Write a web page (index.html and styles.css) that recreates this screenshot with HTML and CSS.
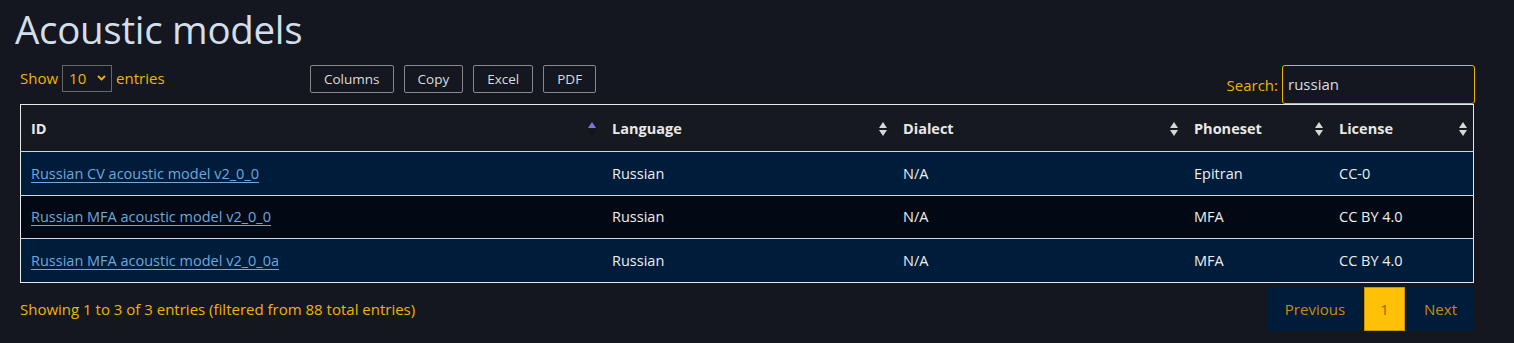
FILE: index.html
```html
<!DOCTYPE html>
<html lang="en">
<head>
  <meta charset="UTF-8">
  <title>Acoustic models</title>
  <link rel="stylesheet" href="styles.css">
</head>
<body>

<h1 class="page-title">Acoustic models</h1>

<div class="dt-top">
  <div class="dt-length">
    Show
    <span class="dt-select">10 <svg width="9" height="6" viewBox="0 0 9 6"><path d="M1 1l3.5 3.5L8 1" fill="none" stroke="#f0b400" stroke-width="1.8"/></svg></span>
    entries
  </div>
  <div class="dt-buttons">
    <button class="dt-btn">Columns</button>
    <button class="dt-btn">Copy</button>
    <button class="dt-btn">Excel</button>
    <button class="dt-btn">PDF</button>
  </div>
  <div class="dt-search">
    Search:
    <div class="dt-input">russian</div>
  </div>
</div>

<table class="dt-table">
  <thead>
    <tr>
      <th class="col-id sorted">ID<span class="sort"><i class="up"></i><i class="down"></i></span></th>
      <th class="col-lang">Language<span class="sort"><i class="up"></i><i class="down"></i></span></th>
      <th class="col-dialect">Dialect<span class="sort"><i class="up"></i><i class="down"></i></span></th>
      <th class="col-phone">Phoneset<span class="sort"><i class="up"></i><i class="down"></i></span></th>
      <th class="col-license">License<span class="sort"><i class="up"></i><i class="down"></i></span></th>
    </tr>
  </thead>
  <tbody>
    <tr class="odd">
      <td><a href="#">Russian CV acoustic model v2_0_0</a></td>
      <td>Russian</td>
      <td>N/A</td>
      <td>Epitran</td>
      <td>CC-0</td>
    </tr>
    <tr class="even">
      <td><a href="#">Russian MFA acoustic model v2_0_0</a></td>
      <td>Russian</td>
      <td>N/A</td>
      <td>MFA</td>
      <td>CC BY 4.0</td>
    </tr>
    <tr class="odd">
      <td><a href="#">Russian MFA acoustic model v2_0_0a</a></td>
      <td>Russian</td>
      <td>N/A</td>
      <td>MFA</td>
      <td>CC BY 4.0</td>
    </tr>
  </tbody>
</table>

<div class="dt-bottom">
  <div class="dt-info">Showing 1 to 3 of 3 entries (filtered from 88 total entries)</div>
  <div class="dt-paging">
    <span class="page-btn">Previous</span>
    <span class="page-btn current">1</span>
    <span class="page-btn">Next</span>
  </div>
</div>

</body>
</html>
```

FILE: styles.css
```css
body {
  margin: 0;
  padding: 0 40px 0 20px;
  background-color: #14171f;
  font-family: "Open Sans", "Noto Sans", sans-serif;
  font-size: 15px;
  color: #e6e6e6;
}
.page-title {
  margin: 0 0 0 -5px;
  padding-top: 6px;
  height: 54px;
  font-weight: 400;
  font-size: 38.5px;
  line-height: 46px;
  color: #d2deea;
  letter-spacing: -0.3px;
}
.dt-top {
  display: flex;
  align-items: flex-start;
  height: 44px;
}
.dt-length {
  display: flex;
  align-items: center;
  gap: 4px;
  width: 290px;
  color: #f0b400;
  height: 28px;
  margin-top: 4px;
}
.dt-select {
  display: inline-flex;
  align-items: center;
  justify-content: space-between;
  box-sizing: border-box;
  width: 50px;
  height: 27px;
  padding: 0 5px 0 6px;
  border: 1px solid #666;
  color: #f0b400;
  font-size: 15px;
}
.dt-buttons {
  display: flex;
  gap: 10px;
  margin-top: 5px;
}
.dt-btn {
  background: transparent;
  border: 1px solid #888;
  border-radius: 2px;
  color: #dcdcdc;
  font-family: inherit;
  font-size: 13.5px;
  height: 28px;
  padding: 0 13px;
}
.dt-search {
  margin-left: auto;
  display: flex;
  align-items: center;
  gap: 4px;
  color: #f0b400;
  margin-top: 5px;
  margin-right: -1px;
}
.dt-input {
  box-sizing: border-box;
  width: 193px;
  height: 39px;
  border: 1px solid #f0b400;
  border-radius: 3px;
  padding: 9px 5px;
  color: #d8dde6;
  font-size: 15px;
  line-height: 19px;
}
.dt-table {
  width: 100%;
  border-collapse: collapse;
  border: 1px solid #e8e8e8;
}
.dt-table th {
  position: relative;
  text-align: left;
  font-weight: 700;
  font-size: 14.5px;
  background: #16191f;
  height: 46px;
  padding: 0 10px;
  color: #e8e8e8;
}
.dt-table td {
  height: 42.5px;
  padding: 0 10px;
  border-top: 1px solid #cfd6de;
  color: #eeeeee;
  font-size: 14.5px;
}
.col-id { width: 561px; }
.col-lang { width: 271px; }
.col-dialect { width: 271px; }
.col-phone { width: 125px; }
tr.odd td { background: #001c3b; }
tr.even td { background: #020914; }
.dt-table a {
  color: #6ea8dc;
  text-decoration: underline;
  text-underline-offset: 3px;
}
.sort {
  position: absolute;
  right: 6px;
  top: 17px;
  display: flex;
  flex-direction: column;
  gap: 2px;
}
.sort i {
  width: 0;
  height: 0;
  border-left: 4px solid transparent;
  border-right: 4px solid transparent;
}
.sort .up { border-bottom: 6px solid #d8d8d8; }
.sort .down { border-top: 6px solid #d8d8d8; }
.sorted .sort .up { border-bottom-color: #7a78e0; }
.sorted .sort .down { border-top-color: #101216; }
.dt-bottom {
  display: flex;
  align-items: center;
  justify-content: space-between;
  margin-top: 4px;
}
.dt-info {
  color: #f0b400;
}
.dt-paging {
  display: flex;
  gap: 2px;
}
.page-btn {
  display: inline-flex;
  align-items: center;
  justify-content: center;
  height: 44px;
  padding: 0 17px;
  background: #001c3b;
  color: #c88a12;
}
.page-btn.current {
  width: 41px;
  padding: 0;
  background: #ffc107;
  border: 1px solid #c69500;
  box-sizing: border-box;
  color: #8a6a00;
}
```
